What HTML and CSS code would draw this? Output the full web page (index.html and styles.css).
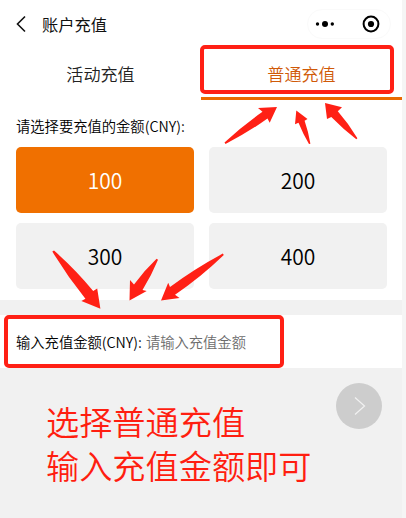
FILE: index.html
```
<!DOCTYPE html>
<html lang="zh-CN">
<head>
    <meta charset="UTF-8">
    <meta name="viewport" content="width=device-width, initial-scale=1.0">
    <title>账户充值</title>
    <link rel="stylesheet" href="styles.css">
</head>
<body>

<div class="page">
    <header class="header">
        <svg class="back" width="10" height="18" viewBox="0 0 10 18">
            <path d="M9 1.5 L1.5 9 L9 16.5" />
        </svg>
        <h1>账户充值</h1>
        <div class="capsule">
            <svg class="more" width="20" height="8" viewBox="0 0 20 8">
                <circle cx="2.5" cy="4" r="1.7" />
                <circle cx="10" cy="4" r="3" />
                <circle cx="17.3" cy="4" r="1.7" />
            </svg>
            <span class="line"></span>
            <svg class="close" width="18" height="18" viewBox="0 0 18 18">
                <circle class="ring" cx="9" cy="9" r="7.4" />
                <circle cx="9" cy="9" r="3.1" />
            </svg>
        </div>
    </header>

    <nav class="tabs">
        <a class="tab">活动充值</a>
        <a class="tab active">普通充值</a>
    </nav>

    <section class="amounts">
        <p class="label">请选择要充值的金额(CNY):</p>
        <div class="grid">
            <button class="amount selected">100</button>
            <button class="amount">200</button>
            <button class="amount">300</button>
            <button class="amount">400</button>
        </div>
    </section>

    <section class="custom">
        <span class="custom-label">输入充值金额(CNY):</span>
        <span class="placeholder">请输入充值金额</span>
    </section>

    <section class="bottom">
        <p class="tip">选择普通充值<br>输入充值金额即可</p>
        <button class="next">
            <svg width="12" height="20" viewBox="0 0 12 20">
                <path d="M1 1.5 L10.5 10 L1 18.5" />
            </svg>
        </button>
    </section>

    <!-- guide marks on top of the page -->
    <div class="mark mark-tab"></div>
    <div class="mark mark-input"></div>
    <svg class="arrows" width="402" height="518" viewBox="0 0 402 518">
        <path d="M277 107 L258 108 L262.5 111.8 Q242 126 224.5 142.5 L225.5 144 Q248 132.5 267.5 118.5 L269.7 122.8 Z" />
        <path d="M296.3 110.5 L295 124.3 L298.5 122.8 Q303 134 309 144 L310.4 143.7 Q308.5 132 304.6 120.7 L307.5 119 Z" />
        <path d="M325 103 L327 119 L331.3 117 Q343 129 356.3 139.2 L357.4 138.2 Q348.5 123.5 337.8 111.3 L342 107.3 Z" />
        <path d="M100.4 308.8 L97.2 288.5 L93.2 291 Q75 269 54 250.6 L52.3 251.6 Q67.5 276.5 85.4 298.8 L81.4 301 Z" />
        <path d="M129.5 300.5 L130 280 L134 284.5 Q144.3 270.5 156.6 258.8 L158 259.8 Q151.5 275.5 142.5 290 L146.7 291 Z" />
        <path d="M161 300.6 L168.2 282.8 L170 287 Q195 268.5 222.8 253.6 L223.8 255 Q201 277 175 294.7 L179.5 298 Z" />
    </svg>
</div>

</body>
</html>
```

FILE: styles.css
```
* {
    box-sizing: border-box;
}

body {
    margin: 0;
    background-color: #f5f5f5;
    font-family: 'Noto Sans CJK SC', sans-serif;
    color: #111;
}

h1, p {
    margin: 0;
    font-weight: normal;
}

button {
    border: none;
    padding: 0;
    font-family: inherit;
}

svg {
    display: block;
}

.page {
    position: relative;
    width: 402px;
    height: 518px;
    overflow: hidden;
    background-color: #f1f1f1;
}

.header {
    display: flex;
    align-items: center;
    height: 48px;
    padding: 0 11px 0 16px;
    background-color: #fff;
}

.back {
    fill: none;
    stroke: #111;
    stroke-width: 1.6;
}

.header h1 {
    margin-left: 16px;
    font-size: 16.3px;
    line-height: 24px;
}

.capsule {
    display: flex;
    align-items: center;
    width: 84px;
    height: 30px;
    margin-left: auto;
    border: 1px solid #fafafa;
    padding: 0 10px 0 7px;
    border-radius: 15px;
}

.capsule .line {
    width: 1px;
    height: 20px;
    margin: 0 14px 0 13px;
    background-color: #f3f3f3;
}

.more, .close {
    flex: none;
    fill: #000;
}

.close .ring {
    fill: none;
    stroke: #000;
    stroke-width: 2;
}

.tabs {
    display: flex;
    height: 52px;
    background-color: #fff;
}

.tab {
    flex: 1;
    border-bottom: 3px solid transparent;
    font-size: 17.1px;
    font-weight: 350;
    line-height: 51px;
    text-align: center;
    color: #222;
}

.tab.active {
    color: #d05a08;
    border-bottom-color: #ea6a00;
}

.amounts {
    height: 200px;
    padding: 15px 15px 0 16px;
    background-color: #fff;
}

.label {
    height: 32px;
    font-size: 14.3px;
    font-weight: 350;
    line-height: 22px;
    color: #000;
}

.grid {
    display: grid;
    grid-template-columns: 178px 178px;
    grid-auto-rows: 66px;
    gap: 10px 15px;
}

.amount {
    border-radius: 5px;
    background-color: #f1f1f1;
    font-size: 21px;
    font-weight: 350;
    line-height: 66px;
    color: #000;
}

.amount.selected {
    background-color: #f07000;
    color: #fff;
}

.custom {
    display: flex;
    align-items: center;
    height: 53px;
    margin-top: 15px;
    padding-left: 16px;
    background-color: #fff;
    font-size: 14.3px;
}

.custom-label {
    font-weight: 350;
    color: #000;
}

.placeholder {
    margin-left: 4px;
    font-weight: 350;
    color: #6c6c6c;
}

.bottom {
    display: flex;
    justify-content: space-between;
    align-items: flex-start;
    padding: 15px 20px 0 46px;
}

.tip {
    margin-top: 16px;
    font-size: 33.2px;
    font-weight: 350;
    line-height: 43.5px;
    color: #ff1e10;
}

.next {
    display: flex;
    align-items: center;
    justify-content: center;
    width: 46px;
    height: 46px;
    border-radius: 50%;
    background-color: #cdcdcd;
}

.next svg {
    margin-left: 2px;
    fill: none;
    stroke: #f1f1f1;
    stroke-width: 1.2;
}

.mark {
    position: absolute;
    border: 4px solid #ff2015;
    border-radius: 5px;
}

.mark-tab {
    left: 200px;
    top: 45px;
    width: 194px;
    height: 49px;
}

.mark-input {
    left: 4px;
    top: 315px;
    width: 280px;
    height: 53px;
}

.arrows {
    position: absolute;
    left: 0;
    top: 0;
    fill: #ff2015;
}
```
